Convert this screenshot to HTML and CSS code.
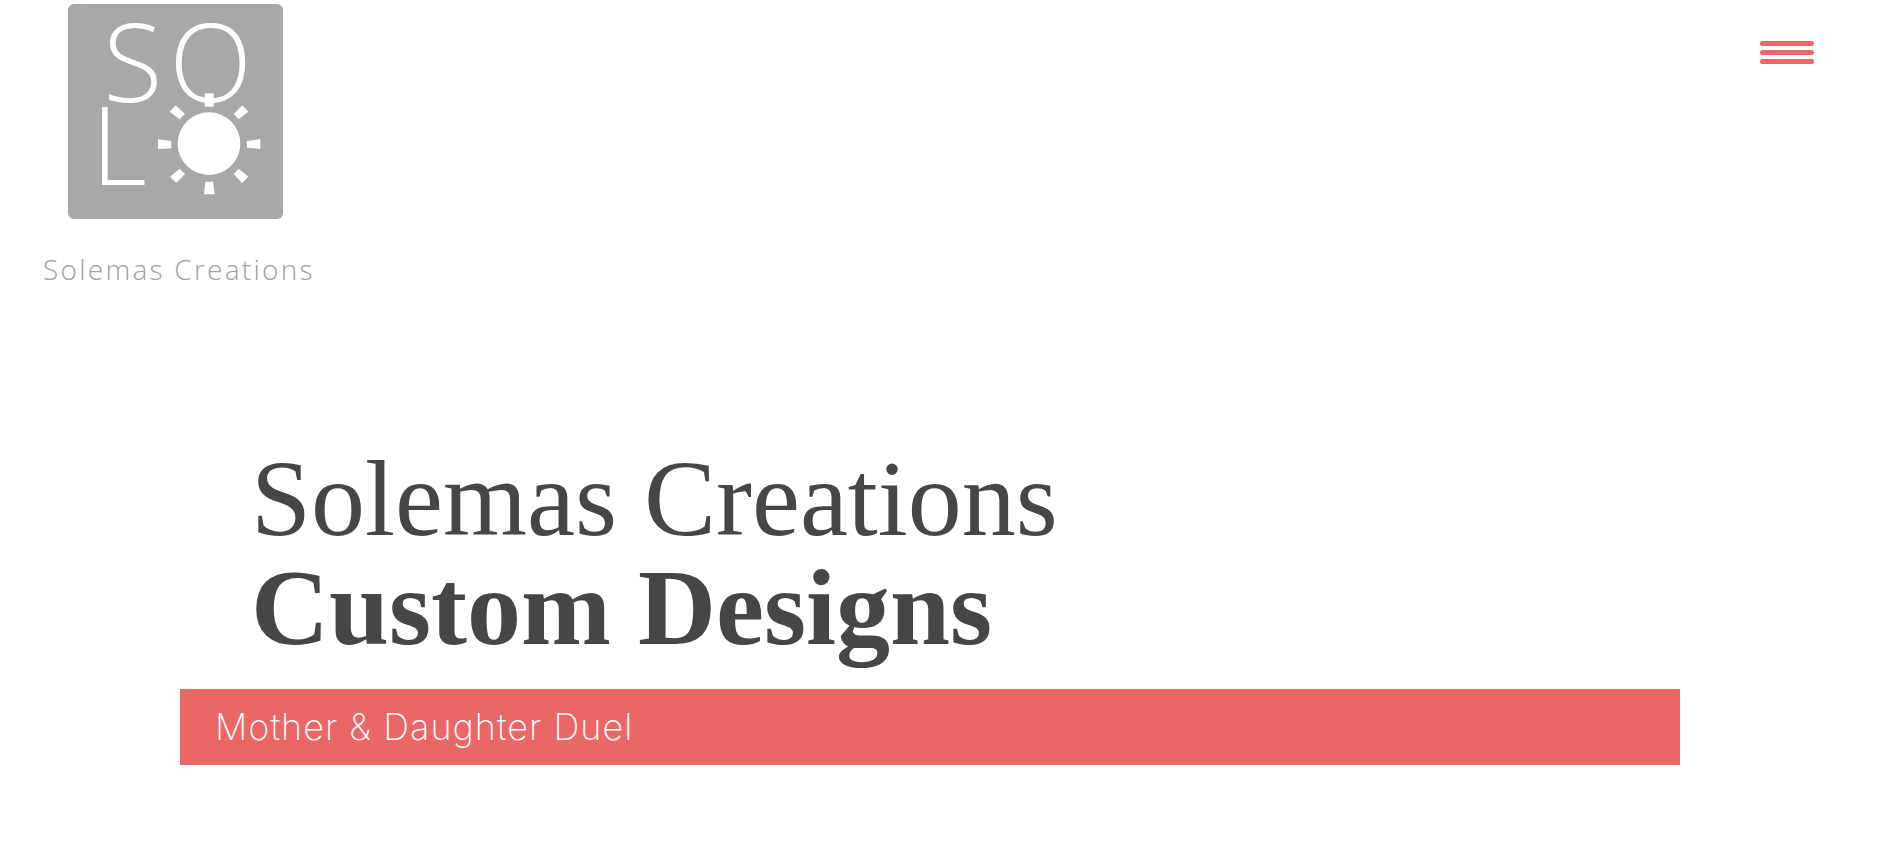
FILE: index.html
```html
<!DOCTYPE html>
<html lang="en">
<head>
  <meta charset="UTF-8">
  <meta name="viewport" content="width=device-width, initial-scale=1">
  <title>Solemas Creations</title>
  <link rel="stylesheet" href="styles.css">
</head>
<body>

<header class="site-header">
  <a class="brand" href="#">
    <svg class="logo" viewBox="85 12 645 645" width="215" height="215" aria-label="Solemas Creations logo">
      <rect x="85" y="12" width="645" height="645" rx="18" fill="#a8a8a8"/>
      <path d="M124 12V657M85 54H730M85 618H730" stroke="#b6b6b6" stroke-width="1" fill="none"/>
      <text class="logo-letter" x="191" y="305">S</text>
      <text class="logo-letter" x="389" y="305">O</text>
      <text class="logo-letter" x="155" y="554">L</text>
      <rect x="495" y="280" width="27" height="40" rx="3" fill="#fff"/>
      <circle cx="508" cy="431" r="94" fill="#fff"/>
      <g fill="#fff">
        <polygon points="497,545 520,545 525,583 493,583"/>
        <polygon points="355,418 395,423 395,445 355,447"/>
        <polygon points="622,423 662,417 662,447 622,443"/>
        <polygon points="408,316 436,342 420,358 390,335"/>
        <polygon points="608,316 626,335 597,358 582,342"/>
        <polygon points="420,506 436,522 410,549 391,530"/>
        <polygon points="597,506 626,530 607,549 582,522"/>
      </g>
    </svg>
    <span class="brand-name">Solemas Creations</span>
  </a>
  <button class="menu-toggle" aria-label="Menu">
    <span></span>
    <span></span>
    <span></span>
  </button>
</header>

<section class="hero">
  <h1>Solemas Creations<br><strong>Custom Designs</strong></h1>
  <div class="hero-banner">Mother &amp; Daughter Duel</div>
</section>

</body>
</html>
```

FILE: styles.css
```css
body {
  margin: 0;
  background: #fff;
  font-family: "Open Sans", sans-serif;
}
.site-header {
  display: flex;
  justify-content: space-between;
  align-items: flex-start;
  padding: 4px 80px 0 43px;
}
.brand {
  display: flex;
  flex-direction: column;
  align-items: center;
  text-decoration: none;
}
.logo {
  display: block;
  overflow: visible;
  margin-right: 7px;
}
.logo-letter {
  font-family: "Open Sans", sans-serif;
  font-weight: 300;
  font-size: 325px;
  fill: #fff;
}
.brand-name {
  margin-top: 31px;
  font-size: 28px;
  font-weight: 300;
  line-height: 38px;
  letter-spacing: 2.25px;
  color: #a0a0a0;
  white-space: nowrap;
}
.menu-toggle {
  display: flex;
  flex-direction: column;
  gap: 4px;
  width: 54px;
  margin-top: 37px;
  padding: 0;
  border: none;
  background: none;
  cursor: pointer;
}
.menu-toggle span {
  display: block;
  height: 5px;
  border-radius: 3px;
  background-color: #ea6767;
}
.hero {
  margin: 156px 214px 0 180px;
}
.hero h1 {
  margin: 0;
  padding-left: 71px;
  font-family: "Liberation Serif", "Times New Roman", serif;
  font-size: 108px;
  font-weight: 400;
  line-height: 109px;
  color: #464646;
}
.hero h1 strong {
  font-weight: 700;
}
.hero-banner {
  margin-top: 27px;
  padding: 0 35px;
  height: 76px;
  line-height: 76px;
  background-color: #ea6767;
  color: #fff;
  font-family: Inter, sans-serif;
  font-size: 36px;
  font-weight: 200;
  letter-spacing: 1px;
}
```
